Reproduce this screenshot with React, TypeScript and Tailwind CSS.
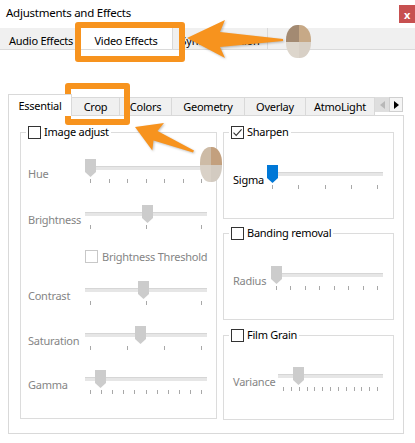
import React from "react";

function Checkbox({ checked = false, disabled = false }: { checked?: boolean; disabled?: boolean }) {
  return (
    <span
      className={
        disabled
          ? "flex h-[13px] w-[13px] shrink-0 items-center justify-center border border-[#c8c8c8] bg-white"
          : "flex h-[13px] w-[13px] shrink-0 items-center justify-center border border-[#333333] bg-white"
      }
    >
      {checked && (
        <svg width="11" height="11" viewBox="0 0 11 11">
          <path d="M1.5 5.6 L4.2 8.4 L9.6 2.4" fill="none" stroke="#333333" strokeWidth="1.1" />
        </svg>
      )}
    </span>
  );
}

function Slider({
  className,
  width,
  pos,
  ticks,
  blue = false,
}: {
  className: string;
  width: number;
  pos: number;
  ticks: number;
  blue?: boolean;
}) {
  const xs = Array.from({ length: ticks }, (_, i) => 5 + (i * (width - 11)) / (ticks - 1));
  return (
    <div className={"relative h-[26px] shrink-0 " + className}>
      <div className="absolute left-0 right-0 top-[7px] h-[4px] border-t border-[#d6d6d6] bg-[#e6e6e6]" />
      {xs.map((x, i) => (
        <div key={i} className="absolute top-[20px] h-[4px] w-px bg-[#a8a8a8]" style={{ left: Math.round(x) }} />
      ))}
      <svg className="absolute top-0" style={{ left: pos }} width="11" height="18" viewBox="0 0 11 18">
        <path d="M0 0H11V13L5.5 18L0 13Z" fill={blue ? "#0078d7" : "#cccccc"} />
      </svg>
    </div>
  );
}

function Blob({ className, tl, tr, bl, br }: { className: string; tl: string; tr: string; bl: string; br: string }) {
  return (
    <div className={"absolute grid grid-cols-2 grid-rows-2 overflow-hidden rounded-[45%] " + className}>
      <div style={{ background: tl }} />
      <div style={{ background: tr }} />
      <div style={{ background: bl }} />
      <div style={{ background: br }} />
    </div>
  );
}

export default function App() {
  return (
    <div className="relative h-[443px] w-[415px] overflow-hidden whitespace-nowrap bg-white text-[11px] leading-[16px] tracking-[-0.25px] text-black font-['Noto_Sans',sans-serif]">
      {/* title bar */}
      <div className="flex h-[28px] items-start justify-between">
        <div className="pl-[6px] pt-[5px] text-[11.5px]">Adjustments and Effects</div>
        <div className="mt-[5px] flex h-[18px] w-[16px] items-center justify-center bg-[#c75050] text-[11px] font-bold leading-none text-white">
          x
        </div>
      </div>

      {/* top tabs */}
      <div className="flex h-[22px] items-end border-b border-[#dadada] bg-[#f0f0f0]">
        <div className="flex h-[21px] w-[80px] items-center border-r border-[#d9d9d9] pl-[9px] pt-[5px]">Audio Effects</div>
        <div className="flex h-[21px] w-[92px] items-center justify-center bg-white pt-[5px]">Video Effects</div>
        <div className="flex h-[21px] w-[96px] items-center justify-center border-x border-[#d9d9d9] pt-[5px]">Synchronization</div>
      </div>

      {/* inner tab widget */}
      <div className="ml-[8px] mt-[44px]">
        <div className="flex h-[21px] items-end">
          <div className="relative z-10 -mb-px flex h-[22px] w-[64px] items-center justify-center border border-b-0 border-[#d9d9d9] bg-white">
            Essential
          </div>
          <div className="flex h-[18px] w-[48px] items-center justify-center border-r border-t border-[#d9d9d9] bg-[#f0f0f0]">Crop</div>
          <div className="flex h-[18px] w-[52px] items-center justify-center border-r border-t border-[#d9d9d9] bg-[#f0f0f0]">Colors</div>
          <div className="flex h-[18px] w-[73px] items-center justify-center border-r border-t border-[#d9d9d9] bg-[#f0f0f0]">Geometry</div>
          <div className="flex h-[18px] w-[61px] items-center justify-center border-r border-t border-[#d9d9d9] bg-[#f0f0f0]">Overlay</div>
          <div className="flex h-[18px] w-[69px] items-center justify-center border-r border-t border-[#d9d9d9] bg-[#f0f0f0]">AtmoLight</div>
          <div className="mb-[3px] flex self-end">
            <div className="flex h-[15px] w-[14px] items-center justify-center bg-[#dedede]">
              <svg width="5" height="8" viewBox="0 0 5 8">
                <path d="M5 0V8L0 4Z" fill="#b8b8b8" />
              </svg>
            </div>
            <div className="flex h-[15px] w-[14px] items-center justify-center border border-[#cfcfcf] bg-[#f5f5f5]">
              <svg width="5" height="8" viewBox="0 0 5 8">
                <path d="M0 0V8L5 4Z" fill="#000000" />
              </svg>
            </div>
          </div>
        </div>

        <div className="flex h-[319px] w-[396px] items-start border border-[#d9d9d9] pl-[11px]">
          {/* left group */}
          <fieldset className="mt-[9px] h-[294px] w-[197px] border border-[#dcdcdc] px-[5px]">
            <legend className="px-[2px]">
              <span className="flex h-[14px] items-center gap-[3px]">
                <Checkbox />
                <span>Image adjust</span>
              </span>
            </legend>
            <div className="pl-[2px] text-[#858585]">
              <div className="mt-[20px] flex h-[26px] items-center">
                <span className="w-[57px] pt-[3px]">Hue</span>
                <Slider className="w-[122px]" width={122} pos={0} ticks={7} />
              </div>
              <div className="mt-[20px] flex h-[26px] items-center">
                <span className="w-[57px] pt-[3px]">Brightness</span>
                <Slider className="w-[122px]" width={122} pos={57} ticks={3} />
              </div>
              <div className="mt-[19px] flex h-[13px] items-center gap-[4px] pl-[57px]">
                <Checkbox disabled />
                <span>Brightness Threshold</span>
              </div>
              <div className="mt-[18px] flex h-[26px] items-center">
                <span className="w-[57px] pt-[3px]">Contrast</span>
                <Slider className="w-[122px]" width={122} pos={53} ticks={3} />
              </div>
              <div className="mt-[19px] flex h-[26px] items-center">
                <span className="w-[57px] pt-[3px]">Saturation</span>
                <Slider className="w-[122px]" width={122} pos={50} ticks={4} />
              </div>
              <div className="mt-[18px] flex h-[26px] items-center">
                <span className="w-[57px] pt-[3px]">Gamma</span>
                <Slider className="w-[122px]" width={122} pos={10} ticks={11} />
              </div>
            </div>
          </fieldset>

          {/* right column */}
          <div className="ml-[6px] flex w-[171px] flex-col">
            <fieldset className="mt-[9px] h-[94px] border border-[#dcdcdc] px-[5px]">
              <legend className="px-[2px]">
                <span className="flex h-[14px] items-center gap-[3px]">
                  <Checkbox checked />
                  <span>Sharpen</span>
                </span>
              </legend>
              <div className="mt-[26px] flex h-[26px] items-center pl-[4px]">
                <span className="w-[34px] pt-[3px]">Sigma</span>
                <Slider className="w-[116px]" width={116} pos={0} ticks={5} blue />
              </div>
            </fieldset>
            <fieldset className="mt-[7px] h-[94px] border border-[#dcdcdc] px-[5px]">
              <legend className="px-[2px]">
                <span className="flex h-[14px] items-center gap-[3px]">
                  <Checkbox />
                  <span>Banding removal</span>
                </span>
              </legend>
              <div className="mt-[26px] flex h-[26px] items-center pl-[4px] text-[#858585]">
                <span className="w-[38px] pt-[3px]">Radius</span>
                <Slider className="w-[112px]" width={112} pos={0} ticks={8} />
              </div>
            </fieldset>
            <fieldset className="mt-[8px] h-[92px] border border-[#dcdcdc] px-[5px]">
              <legend className="px-[2px]">
                <span className="flex h-[14px] items-center gap-[3px]">
                  <Checkbox />
                  <span>Film Grain</span>
                </span>
              </legend>
              <div className="mt-[25px] flex h-[26px] items-center pl-[4px] text-[#858585]">
                <span className="w-[45px] pt-[3px]">Variance</span>
                <Slider className="w-[105px]" width={105} pos={15} ticks={13} />
              </div>
            </fieldset>
          </div>
        </div>
      </div>

      {/* annotations */}
      <div className="absolute left-[75px] top-[22px] h-[40px] w-[110px] rounded-[3px] border-[6px] border-[#f7931e]" />
      <div className="absolute left-[65px] top-[83px] h-[42px] w-[65px] rounded-[3px] border-[6px] border-[#f7931e]" />
      <svg className="pointer-events-none absolute left-0 top-0 drop-shadow-[1px_1px_1px_rgba(0,0,0,0.25)]" width="415" height="443">
        <path d="M187 38 L225 20 L220 32 L283 39 L283 41 L220 47 L225 58 Z" fill="#f7931e" />
        <path d="M135 127 L164 123 L157.5 131 L194 150.5 L193 152.5 L153.5 140.5 L152.3 150.4 Z" fill="#f7931e" />
      </svg>
      <Blob className="left-[286px] top-[25px] h-[33px] w-[25px]" tl="#a38a72" tr="#c7a987" bl="#ddd6cc" br="#d8d0c6" />
      <Blob className="left-[200px] top-[147px] h-[35px] w-[22px]" tl="#cdbba6" tr="#c3a07e" bl="#d9d1c7" br="#d3cbc1" />
    </div>
  );
}
